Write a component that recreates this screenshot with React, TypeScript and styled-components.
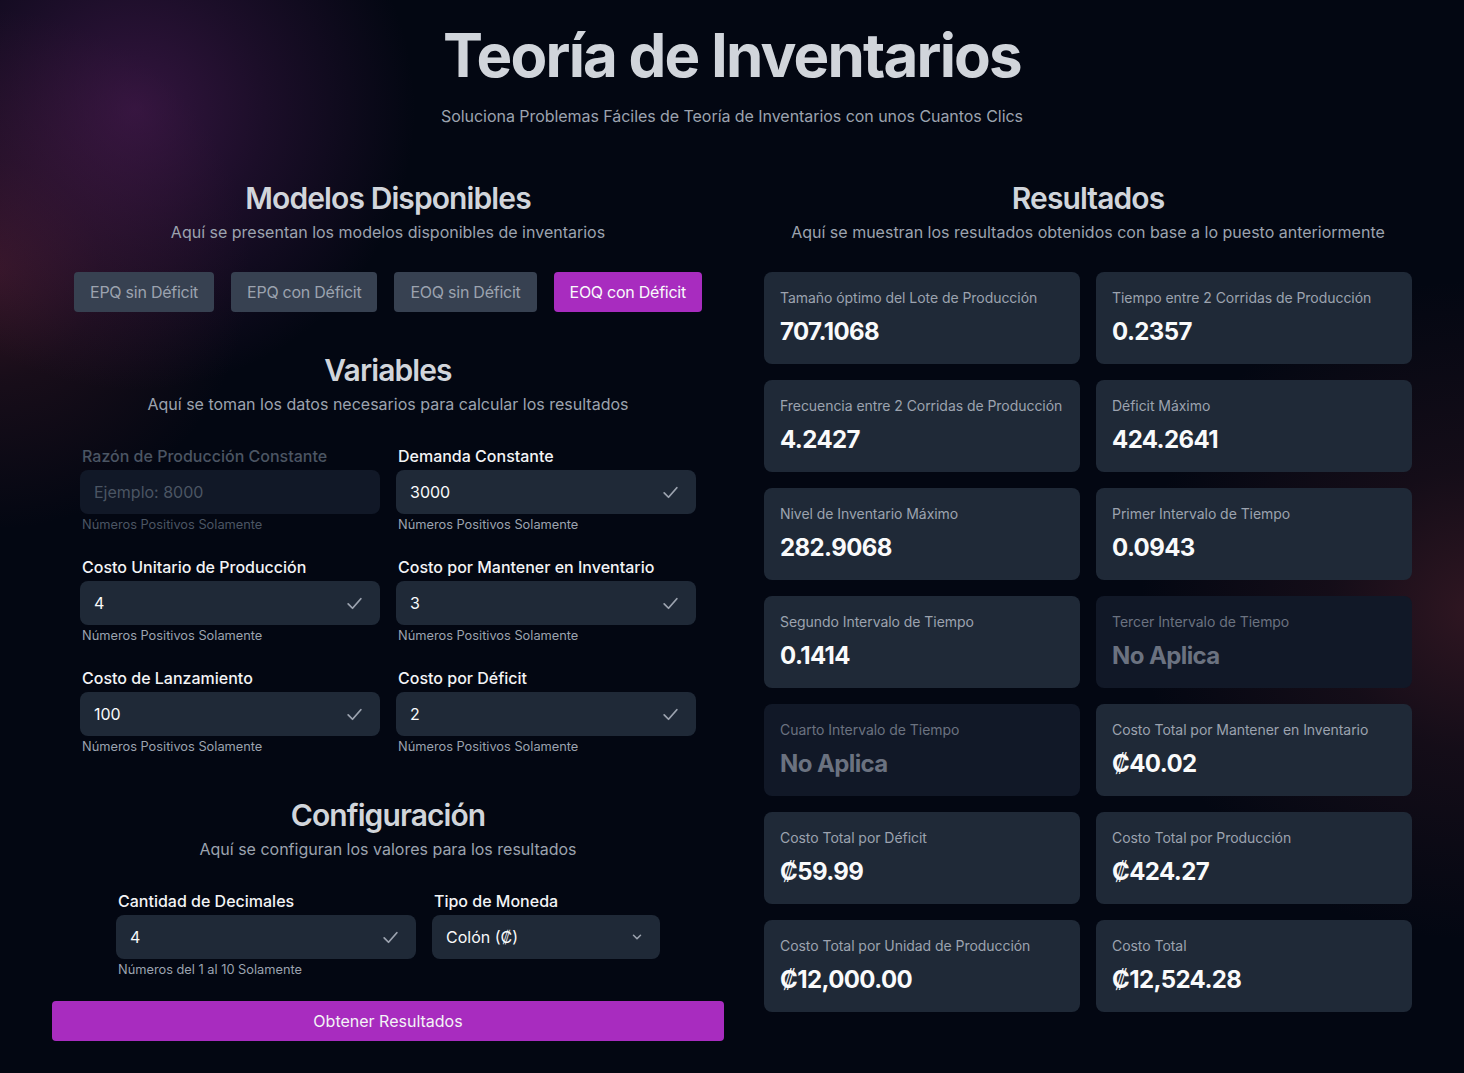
import styled, { createGlobalStyle } from "styled-components";

const GlobalStyle = createGlobalStyle`
  * { box-sizing: border-box; }
  html, body {
    margin: 0;
    padding: 0;
    background: #030712;
  }
  body {
    font-family: Inter, "Noto Sans", sans-serif;
    color: #d1d5db;
  }
`

type Field = {
  label: string
  value?: string
  placeholder?: string
  disabled?: boolean
  hint: string
}

type Result = {
  label: string
  value: string
  muted?: boolean
}

const models = ["EPQ sin Déficit", "EPQ con Déficit", "EOQ sin Déficit", "EOQ con Déficit"]

const fields: Field[] = [
  { label: "Razón de Producción Constante", placeholder: "Ejemplo: 8000", disabled: true, hint: "Números Positivos Solamente" },
  { label: "Demanda Constante", value: "3000", hint: "Números Positivos Solamente" },
  { label: "Costo Unitario de Producción", value: "4", hint: "Números Positivos Solamente" },
  { label: "Costo por Mantener en Inventario", value: "3", hint: "Números Positivos Solamente" },
  { label: "Costo de Lanzamiento", value: "100", hint: "Números Positivos Solamente" },
  { label: "Costo por Déficit", value: "2", hint: "Números Positivos Solamente" },
]

const results: Result[] = [
  { label: "Tamaño óptimo del Lote de Producción", value: "707.1068" },
  { label: "Tiempo entre 2 Corridas de Producción", value: "0.2357" },
  { label: "Frecuencia entre 2 Corridas de Producción", value: "4.2427" },
  { label: "Déficit Máximo", value: "424.2641" },
  { label: "Nivel de Inventario Máximo", value: "282.9068" },
  { label: "Primer Intervalo de Tiempo", value: "0.0943" },
  { label: "Segundo Intervalo de Tiempo", value: "0.1414" },
  { label: "Tercer Intervalo de Tiempo", value: "No Aplica", muted: true },
  { label: "Cuarto Intervalo de Tiempo", value: "No Aplica", muted: true },
  { label: "Costo Total por Mantener en Inventario", value: "₡40.02" },
  { label: "Costo Total por Déficit", value: "₡59.99" },
  { label: "Costo Total por Producción", value: "₡424.27" },
  { label: "Costo Total por Unidad de Producción", value: "₡12,000.00" },
  { label: "Costo Total", value: "₡12,524.28" },
]

const Check = () => (
  <svg width="19" height="19" viewBox="0 0 24 24" fill="none" stroke="#9ca3af" strokeWidth="2.2" strokeLinecap="round" strokeLinejoin="round">
    <polyline points="4 12.5 9.5 18 20 6" />
  </svg>
)

const Chevron = () => (
  <svg width="14" height="14" viewBox="0 0 24 24" fill="none" stroke="#9ca3af" strokeWidth="2.6" strokeLinecap="round" strokeLinejoin="round">
    <polyline points="6 9 12 15 18 9" />
  </svg>
)

function FormField({ f }: { f: Field }) {
  return (
    <FieldBox>
      <Label $disabled={f.disabled}>{f.label}</Label>
      <InputBox $disabled={f.disabled}>
        {f.value ? <InputText>{f.value}</InputText> : <Placeholder>{f.placeholder}</Placeholder>}
        {f.disabled ? null : <Check />}
      </InputBox>
      <Hint $disabled={f.disabled}>{f.hint}</Hint>
    </FieldBox>
  )
}

export default function App() {
  return (
    <Page>
      <GlobalStyle />
      <Header>
        <Title>Teoría de Inventarios</Title>
        <Lead>Soluciona Problemas Fáciles de Teoría de Inventarios con unos Cuantos Clics</Lead>
      </Header>

      <Columns>
        <Column>
          <Section>
            <Heading>Modelos Disponibles</Heading>
            <Sub>Aquí se presentan los modelos disponibles de inventarios</Sub>
            <ModelRow>
              {models.map((m, i) => (
                <ModelButton key={m} $active={i === 3}>{m}</ModelButton>
              ))}
            </ModelRow>
          </Section>

          <Section $top={40}>
            <Heading>Variables</Heading>
            <Sub>Aquí se toman los datos necesarios para calcular los resultados</Sub>
            <FieldGrid>
              {fields.map(f => <FormField key={f.label} f={f} />)}
            </FieldGrid>
          </Section>

          <Section $top={42}>
            <Heading>Configuración</Heading>
            <Sub>Aquí se configuran los valores para los resultados</Sub>
            <ConfigGrid>
              <FormField f={{ label: "Cantidad de Decimales", value: "4", hint: "Números del 1 al 10 Solamente" }} />
              <FieldBox>
                <Label>Tipo de Moneda</Label>
                <InputBox>
                  <InputText>Colón (₡)</InputText>
                  <Chevron />
                </InputBox>
              </FieldBox>
            </ConfigGrid>
          </Section>

          <Submit>Obtener Resultados</Submit>
        </Column>

        <Column>
          <Section>
            <Heading>Resultados</Heading>
            <Sub>Aquí se muestran los resultados obtenidos con base a lo puesto anteriormente</Sub>
            <ResultGrid>
              {results.map(r => (
                <Card key={r.label} $muted={r.muted}>
                  <CardLabel $muted={r.muted}>{r.label}</CardLabel>
                  <CardValue $muted={r.muted}>{r.value}</CardValue>
                </Card>
              ))}
            </ResultGrid>
          </Section>
        </Column>
      </Columns>
    </Page>
  )
}

const Page = styled.div`
  min-height: 1073px;
  padding-top: 25px;
  background:
    radial-gradient(circle at 135px 110px, rgba(92, 32, 100, 0.55) 0, rgba(92, 32, 100, 0.28) 130px, transparent 280px),
    radial-gradient(circle at -10px 270px, rgba(100, 36, 52, 0.5) 0, rgba(100, 36, 52, 0.22) 110px, transparent 260px),
    radial-gradient(circle at 1470px 610px, rgba(100, 40, 52, 0.45) 0, rgba(100, 40, 52, 0.18) 140px, transparent 330px),
    #030712;
`

const Header = styled.header`
  display: flex;
  flex-direction: column;
  align-items: center;
`

const Title = styled.h1`
  margin: 0;
  font-size: 60px;
  line-height: 60px;
  font-weight: 700;
  letter-spacing: -1.8px;
  color: #d1d5db;
`

const Lead = styled.p`
  margin: 19px 0 0;
  font-size: 16px;
  line-height: 24px;
  letter-spacing: -0.05px;
  color: #9ca3af;
`

const Columns = styled.main`
  width: 1360px;
  margin: 52px auto 0;
  display: grid;
  grid-template-columns: 672px 648px;
  column-gap: 40px;
`

const Column = styled.div`
  display: flex;
  flex-direction: column;
  align-items: center;
`

const Section = styled.section<{ $top?: number }>`
  width: 100%;
  display: flex;
  flex-direction: column;
  align-items: center;
  margin-top: ${p => p.$top ?? 0}px;
`

const Heading = styled.h2`
  margin: 0;
  font-size: 30px;
  line-height: 36px;
  font-weight: 600;
  letter-spacing: -0.9px;
  color: #d1d5db;
`

const Sub = styled.p`
  margin: 4px 0 0;
  font-size: 16px;
  line-height: 24px;
  color: #9ca3af;
`

const ModelRow = styled.div`
  display: flex;
  gap: 17px;
  margin-top: 28px;
`

const ModelButton = styled.button<{ $active?: boolean }>`
  height: 40px;
  padding: 0 16px;
  border: none;
  border-radius: 4px;
  font-family: inherit;
  font-size: 16px;
  letter-spacing: -0.25px;
  background: ${p => (p.$active ? "#a82cbf" : "#374151")};
  color: ${p => (p.$active ? "#f9fafb" : "#9ca3af")};
`

const FieldGrid = styled.div`
  width: 616px;
  display: grid;
  grid-template-columns: 1fr 1fr;
  column-gap: 16px;
  row-gap: 22px;
  margin-top: 28px;
`

const ConfigGrid = styled.div`
  width: 544px;
  display: grid;
  grid-template-columns: 300px 228px;
  column-gap: 16px;
  margin-top: 28px;
`

const FieldBox = styled.div`
  display: flex;
  flex-direction: column;
`

const Label = styled.label<{ $disabled?: boolean }>`
  padding-left: 2px;
  font-size: 16px;
  line-height: 24px;
  font-weight: 500;
  color: ${p => (p.$disabled ? "#4b5563" : "#f3f4f6")};
  margin-bottom: 2px;
`

const InputBox = styled.div<{ $disabled?: boolean }>`
  height: 44px;
  display: flex;
  align-items: center;
  justify-content: space-between;
  padding: 0 16px 0 14px;
  border-radius: 8px;
  background: ${p => (p.$disabled ? "#111827" : "#1f2937")};
`

const InputText = styled.span`
  font-size: 16px;
  color: #f9fafb;
`

const Placeholder = styled.span`
  font-size: 16px;
  color: #4b5563;
`

const Hint = styled.span<{ $disabled?: boolean }>`
  padding-left: 2px;
  margin-top: 3px;
  font-size: 12.8px;
  line-height: 16px;
  color: ${p => (p.$disabled ? "#4b5563" : "#9ca3af")};
`

const Submit = styled.button`
  width: 100%;
  height: 40px;
  margin-top: 23px;
  border: none;
  border-radius: 4px;
  background: #a82cbf;
  color: #f3f4f6;
  font-family: inherit;
  font-size: 16px;
`

const ResultGrid = styled.div`
  width: 100%;
  display: grid;
  grid-template-columns: 1fr 1fr;
  gap: 16px;
  margin-top: 28px;
`

const Card = styled.div<{ $muted?: boolean }>`
  height: 92px;
  padding: 16px;
  border-radius: 8px;
  background: ${p => (p.$muted ? "#111827" : "#1f2937")};
  display: flex;
  flex-direction: column;
  gap: 8px;
`

const CardLabel = styled.span<{ $muted?: boolean }>`
  white-space: nowrap;
  font-size: 14px;
  line-height: 20px;
  letter-spacing: -0.05px;
  color: ${p => (p.$muted ? "#6b7280" : "#9ca3af")};
`

const CardValue = styled.span<{ $muted?: boolean }>`
  font-size: 24px;
  line-height: 32px;
  font-weight: 700;
  letter-spacing: -0.6px;
  color: ${p => (p.$muted ? "#6b7280" : "#f9fafb")};
`
